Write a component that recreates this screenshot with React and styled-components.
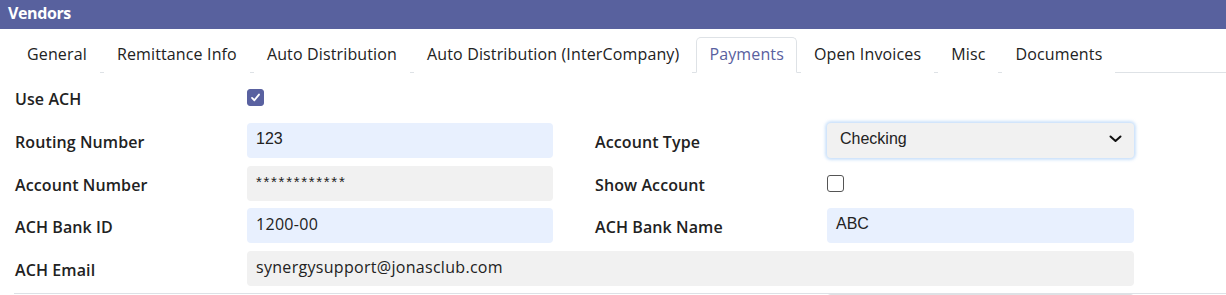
import React from "react";
import styled, { createGlobalStyle } from "styled-components";

const GlobalStyle = createGlobalStyle`
  html, body { margin: 0; padding: 0; background: #fff; }
  body { font-family: "Open Sans", sans-serif; color: #222; }
  * { box-sizing: border-box; }
`;

const Page = styled.div`
  width: 1226px;
  height: 295px;
  overflow: hidden;
  background: #fff;
`;

const Header = styled.div`
  height: 29px;
  background: #58619e;
  color: #fff;
  font-family: "Open Sans", sans-serif;
  font-weight: 700;
  font-size: 16px;
  letter-spacing: -0.4px;
  display: flex;
  align-items: center;
  padding: 0 0 3px 8px;
`;

const Tabs = styled.div`
  display: flex;
  align-items: flex-end;
  gap: 4px;
  margin: 8px 0 0 14px;
  border-bottom: 1px solid #dee2e6;
  height: 36px;
`;

const Tab = styled.div`
  height: 36px;
  display: flex;
  align-items: center;
  padding: 0 12px 2px;
  margin-bottom: -1px;
  font-size: 16px;
  font-weight: 500;
  letter-spacing: 0.14px;
  color: ${(p) => (p.$active ? "#5961a0" : "#222")};
  background: #fff;
  border: 1px solid ${(p) => (p.$active ? "#dee2e6" : "transparent")};
  border-bottom-color: ${(p) => (p.$active ? "#fff" : "transparent")};
  border-radius: 5px 5px 0 0;
  white-space: nowrap;
`;

const Form = styled.div`
  display: grid;
  grid-template-columns: 538px 539px;
  column-gap: 42px;
  row-gap: 7.67px;
  padding: 7.3px 0 7px 15px;
`;

const Field = styled.div`
  display: grid;
  grid-template-columns: 232px 1fr;
  align-items: center;
  height: 35px;
  grid-column: ${(p) => (p.$wide ? "1 / span 2" : "auto")};
`;

const Label = styled.div`
  font-size: 16px;
  font-weight: 600;
  letter-spacing: 0.1px;
  color: #222;
  padding-top: 3px;
`;

const Input = styled.div`
  height: 35px;
  border-radius: 4px;
  background: ${(p) => (p.$blue ? "#e8f0fe" : "#f1f1f1")};
  display: flex;
  align-items: center;
  padding: 0 9px 3px;
  font-family: ${(p) => (p.$arial ? '"Liberation Sans", Arial, sans-serif' : '"Open Sans", sans-serif')};
  letter-spacing: ${(p) => (p.$arial ? "0" : "0.3px")};
  font-size: 16px;
  color: #222;
`;

const Masked = styled.span`
  font-family: "Liberation Sans", Arial, sans-serif;
  font-size: 15px;
  letter-spacing: 1.7px;
`;

const Select = styled(Input)`
  justify-content: space-between;
  padding: 0 12px 3px 13px;
  box-shadow: 0 0 3px 2px rgba(160, 200, 245, 0.55);
`;

const Box = styled.div`
  width: 17px;
  height: 17px;
  border-radius: 3px;
  background: ${(p) => (p.$checked ? "#5961a0" : "#fff")};
  border: 1px solid ${(p) => (p.$checked ? "#5961a0" : "#555")};
  display: flex;
  align-items: center;
  justify-content: center;
`;

const Divider = styled.div`
  margin-left: 14px;
  border-top: 1px solid #dde1e6;
  display: grid;
  grid-template-columns: 813px 307px;
`;

const NextInput = styled.div`
  grid-column: 2;
  height: 8px;
  background: #dfe1e4;
  border-radius: 4px 4px 0 0;
`;

const Checkbox = ({ checked }) => (
  <Box $checked={checked}>
    {checked && (
      <svg width="11" height="11" viewBox="0 0 12 12">
        <path d="M2.2 6.4 L4.8 9 L9.8 2.8" fill="none" stroke="#fff" strokeWidth="2" strokeLinecap="round" strokeLinejoin="round" />
      </svg>
    )}
  </Box>
);

const tabs = [
  "General",
  "Remittance Info",
  "Auto Distribution",
  "Auto Distribution (InterCompany)",
  "Payments",
  "Open Invoices",
  "Misc",
  "Documents",
];

export default function App() {
  return (
    <Page>
      <GlobalStyle />
      <Header>Vendors</Header>
      <Tabs>
        {tabs.map((t) => (
          <Tab key={t} $active={t === "Payments"}>{t}</Tab>
        ))}
      </Tabs>
      <Form>
        <Field>
          <Label>Use ACH</Label>
          <Checkbox checked />
        </Field>
        <div />
        <Field>
          <Label>Routing Number</Label>
          <Input $blue $arial>123</Input>
        </Field>
        <Field>
          <Label>Account Type</Label>
          <Select $arial>
            <span>Checking</span>
            <svg width="13" height="8" viewBox="0 0 13 8">
              <path d="M1.5 1.5 L6.5 6 L11.5 1.5" fill="none" stroke="#111" strokeWidth="2" strokeLinecap="round" strokeLinejoin="round" />
            </svg>
          </Select>
        </Field>
        <Field>
          <Label>Account Number</Label>
          <Input>
            <Masked>************</Masked>
          </Input>
        </Field>
        <Field>
          <Label>Show Account</Label>
          <Checkbox />
        </Field>
        <Field>
          <Label>ACH Bank ID</Label>
          <Input $blue>1200-00</Input>
        </Field>
        <Field>
          <Label>ACH Bank Name</Label>
          <Input $blue $arial>ABC</Input>
        </Field>
        <Field $wide>
          <Label>ACH Email</Label>
          <Input>synergysupport@jonasclub.com</Input>
        </Field>
      </Form>
      <Divider>
        <NextInput />
      </Divider>
    </Page>
  );
}
